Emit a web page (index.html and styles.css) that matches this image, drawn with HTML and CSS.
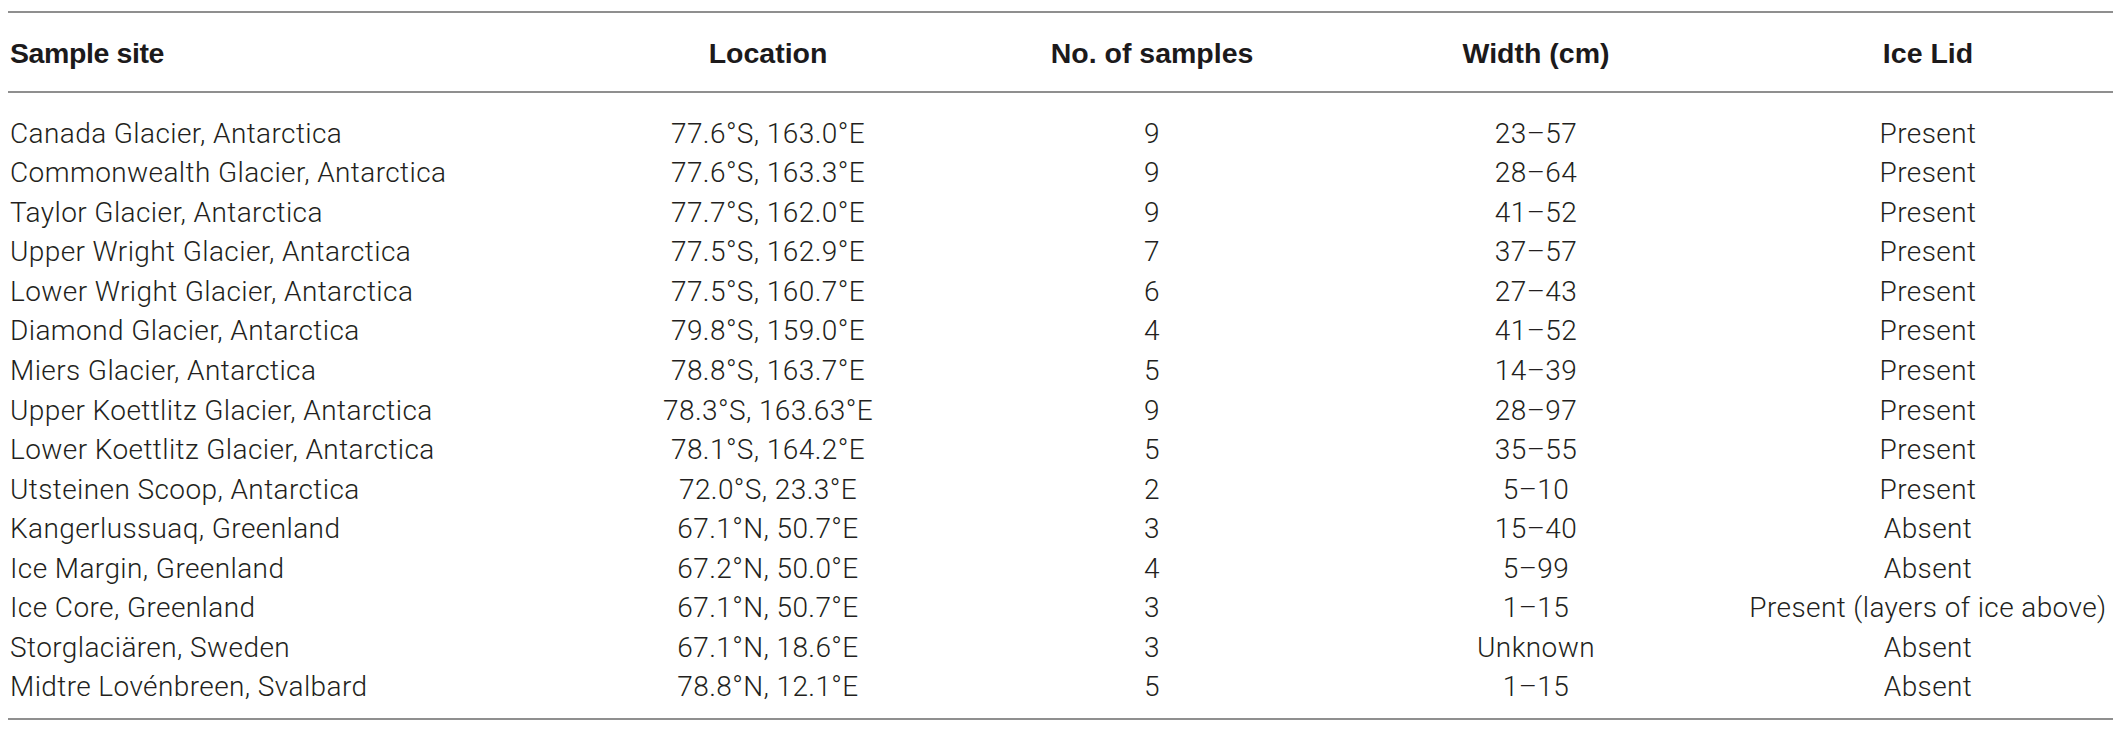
FILE: index.html
```html
<!DOCTYPE html>
<html lang="en">
<head>
<meta charset="utf-8">
<title>Sample sites</title>
<link rel="stylesheet" href="styles.css">
</head>
<body>
<div class="wrap">
<table class="data">
<colgroup>
<col class="c1"><col class="c2"><col class="c3"><col class="c4"><col class="c5">
</colgroup>
<thead>
<tr><th class="left">Sample site</th><th>Location</th><th>No. of samples</th><th>Width (cm)</th><th>Ice Lid</th></tr>
</thead>
<tbody>
<tr><td class="left">Canada Glacier, Antarctica</td><td>77.6°S, 163.0°E</td><td>9</td><td>23–57</td><td>Present</td></tr>
<tr><td class="left">Commonwealth Glacier, Antarctica</td><td>77.6°S, 163.3°E</td><td>9</td><td>28–64</td><td>Present</td></tr>
<tr><td class="left">Taylor Glacier, Antarctica</td><td>77.7°S, 162.0°E</td><td>9</td><td>41–52</td><td>Present</td></tr>
<tr><td class="left">Upper Wright Glacier, Antarctica</td><td>77.5°S, 162.9°E</td><td>7</td><td>37–57</td><td>Present</td></tr>
<tr><td class="left">Lower Wright Glacier, Antarctica</td><td>77.5°S, 160.7°E</td><td>6</td><td>27–43</td><td>Present</td></tr>
<tr><td class="left">Diamond Glacier, Antarctica</td><td>79.8°S, 159.0°E</td><td>4</td><td>41–52</td><td>Present</td></tr>
<tr><td class="left">Miers Glacier, Antarctica</td><td>78.8°S, 163.7°E</td><td>5</td><td>14–39</td><td>Present</td></tr>
<tr><td class="left">Upper Koettlitz Glacier, Antarctica</td><td>78.3°S, 163.63°E</td><td>9</td><td>28–97</td><td>Present</td></tr>
<tr><td class="left">Lower Koettlitz Glacier, Antarctica</td><td>78.1°S, 164.2°E</td><td>5</td><td>35–55</td><td>Present</td></tr>
<tr><td class="left">Utsteinen Scoop, Antarctica</td><td>72.0°S, 23.3°E</td><td>2</td><td>5–10</td><td>Present</td></tr>
<tr><td class="left">Kangerlussuaq, Greenland</td><td>67.1°N, 50.7°E</td><td>3</td><td>15–40</td><td>Absent</td></tr>
<tr><td class="left">Ice Margin, Greenland</td><td>67.2°N, 50.0°E</td><td>4</td><td>5–99</td><td>Absent</td></tr>
<tr><td class="left">Ice Core, Greenland</td><td>67.1°N, 50.7°E</td><td>3</td><td>1–15</td><td>Present (layers of ice above)</td></tr>
<tr><td class="left">Storglaciären, Sweden</td><td>67.1°N, 18.6°E</td><td>3</td><td>Unknown</td><td>Absent</td></tr>
<tr><td class="left">Midtre Lovénbreen, Svalbard</td><td>78.8°N, 12.1°E</td><td>5</td><td>1–15</td><td>Absent</td></tr>
</tbody>
</table>
</div>
</body>
</html>
```

FILE: styles.css
```css
html, body {
  margin: 0;
  padding: 0;
  background: #ffffff;
}

.wrap {
  padding: 11px 8px 0 8px;
}

.data {
  width: 2105px;
  table-layout: fixed;
  border-collapse: collapse;
  border-top: 2px solid #8f8f8f;
  border-bottom: 2px solid #8f8f8f;
  color: #231f20;
}

.c1 { width: 553px; }
.c2 { width: 414px; }
.c3 { width: 354px; }
.c4 { width: 414px; }
.c5 { width: 370px; }

.data thead tr {
  border-bottom: 2px solid #8f8f8f;
}

.data th {
  font-family: "Liberation Sans", Arial, sans-serif;
  font-weight: bold;
  font-size: 28.5px;
  line-height: 76px;
  padding: 2px 0 0 0;
  text-align: center;
  color: #1c1a1b;
  white-space: nowrap;
}

.data th.left {
  letter-spacing: -0.4px;
}

.data td {
  font-family: Roboto, "Liberation Sans", sans-serif;
  font-weight: 300;
  font-size: 28px;
  letter-spacing: 0.4px;
  line-height: 39.57px;
  padding: 0;
  text-align: center;
  white-space: nowrap;
}

.data .left {
  text-align: left;
  padding-left: 2px;
}

.data tbody tr:first-child td {
  padding-top: 20.6px;
}

.data tbody tr:last-child td {
  padding-bottom: 10.8px;
}
```
